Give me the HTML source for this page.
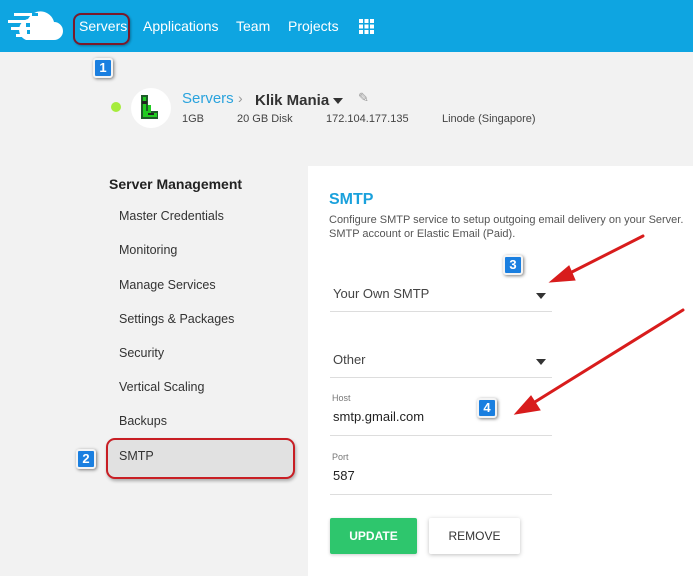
<!DOCTYPE html>
<html><head><meta charset="utf-8"><style>
*{margin:0;padding:0;box-sizing:border-box}
body{width:693px;height:576px;overflow:hidden;background:#f2f2f2;font-family:"Liberation Sans",sans-serif;position:relative;color:#333}
.a{position:absolute;white-space:nowrap}
.hdr{position:absolute;left:0;top:0;width:693px;height:52px;background:#0ea5e1}
.nav{color:#fff;font-size:14px;top:18px}
.badge{position:absolute;width:20px;height:20px;background:#1a7fe0;border:2px solid #f4f4f4;border-radius:3px;color:#fff;font-size:13px;font-weight:bold;text-align:center;line-height:16px;box-shadow:1px 1px 3px rgba(0,0,0,.5)}
.side{font-size:12.5px;color:#333;left:119px}
.panel{position:absolute;left:308px;top:166px;width:385px;height:410px;background:#fff}
.line{position:absolute;left:330px;width:222px;height:1px;background:#ddd}
.caret{position:absolute;width:0;height:0;border-left:5px solid transparent;border-right:5px solid transparent;border-top:6px solid #333}
</style></head><body>
<div class="hdr"></div>
<svg class="a" style="left:8px;top:10px" width="56" height="32" viewBox="0 0 56 32">
<path d="M18 30 H46 A9 9 0 0 0 46 12 A14 14 0 0 0 20 9 A11 11 0 0 0 18 30Z" fill="#fff"/>
<rect x="8" y="3" width="22" height="3" fill="#0ea5e1"/>
<rect x="6" y="3" width="18" height="3" fill="#fff"/><rect x="0" y="10" width="18" height="3" fill="#fff"/><rect x="3" y="17" width="16" height="3" fill="#fff"/><rect x="8" y="24" width="12" height="3" fill="#fff"/>
<rect x="18" y="13" width="4" height="4" fill="#0ea5e1"/><rect x="19" y="20" width="3" height="4" fill="#0ea5e1"/>
</svg>
<div class="a nav" style="left:79px">Servers</div>
<div class="a" style="left:73px;top:13px;width:57px;height:32px;border:2px solid #7a1a2a;border-radius:8px;box-shadow:1px 1px 2px rgba(0,0,0,.3)"></div>
<div class="a nav" style="left:143px">Applications</div>
<div class="a nav" style="left:236px">Team</div>
<div class="a nav" style="left:288px">Projects</div>
<svg class="a" style="left:359px;top:19px" width="15" height="15"><g fill="#fff"><rect x="0" y="0" width="4" height="4"/><rect x="5.5" y="0" width="4" height="4"/><rect x="11" y="0" width="4" height="4"/><rect x="0" y="5.5" width="4" height="4"/><rect x="5.5" y="5.5" width="4" height="4"/><rect x="11" y="5.5" width="4" height="4"/><rect x="0" y="11" width="4" height="4"/><rect x="5.5" y="11" width="4" height="4"/><rect x="11" y="11" width="4" height="4"/></g></svg>
<div class="badge" style="left:93px;top:58px">1</div>

<div class="a" style="left:111px;top:102px;width:10px;height:10px;border-radius:50%;background:#a6ec3c"></div>
<div class="a" style="left:131px;top:88px;width:40px;height:40px;border-radius:50%;background:#fff"></div>
<svg class="a" style="left:138px;top:93px" width="26" height="30"><path d="M3 2h7v16h10v8H3z" fill="#1f5b2a"/><path d="M5 4h3v14h2v-6h3v8h6v4H5z" fill="#2c2"/><path d="M4 8h5v3H4zM10 20h6v2h-6z" fill="#222"/></svg>
<div class="a" style="left:182px;top:90px;font-size:15px;color:#2aa3dd">Servers</div>
<div class="a" style="left:238px;top:90px;font-size:14px;color:#999">›</div>
<div class="a" style="left:255px;top:92px;font-size:15px;font-weight:bold;color:#333">Klik Mania</div>
<div class="caret" style="left:333px;top:98px"></div>
<div class="a" style="left:358px;top:90px;font-size:13px;color:#999">✎</div>
<div class="a" style="left:182px;top:113px;font-size:11px;color:#444">1GB</div>
<div class="a" style="left:237px;top:113px;font-size:11px;color:#444">20 GB Disk</div>
<div class="a" style="left:326px;top:113px;font-size:11px;color:#444">172.104.177.135</div>
<div class="a" style="left:442px;top:113px;font-size:11px;color:#444">Linode (Singapore)</div>

<div class="a" style="left:109px;top:176px;font-size:14px;font-weight:bold;color:#222">Server Management</div>
<div class="a side" style="top:209px">Master Credentials</div>
<div class="a side" style="top:243px">Monitoring</div>
<div class="a side" style="top:278px">Manage Services</div>
<div class="a side" style="top:312px">Settings &amp; Packages</div>
<div class="a side" style="top:346px">Security</div>
<div class="a side" style="top:380px">Vertical Scaling</div>
<div class="a side" style="top:414px">Backups</div>
<div class="a" style="left:106px;top:438px;width:189px;height:41px;background:#e1e1e1;border:2px solid #c81e24;border-radius:9px;box-shadow:1px 2px 3px rgba(0,0,0,.3)"></div>
<div class="a side" style="top:449px">SMTP</div>
<div class="badge" style="left:76px;top:449px">2</div>

<div class="panel"></div>
<div class="a" style="left:329px;top:191px;font-size:16px;font-weight:bold;color:#1aa1dc">SMTP</div>
<div class="a" style="left:329px;top:213px;font-size:11px;color:#555;line-height:14px">Configure SMTP service to setup outgoing email delivery on your Server.<br>SMTP account or Elastic Email (Paid).</div>
<div class="a" style="left:333px;top:286px;font-size:13px;color:#444">Your Own SMTP</div>
<div class="caret" style="left:536px;top:293px"></div>
<div class="line" style="top:311px"></div>
<div class="a" style="left:333px;top:352px;font-size:13px;color:#444">Other</div>
<div class="caret" style="left:536px;top:359px"></div>
<div class="line" style="top:377px"></div>
<div class="a" style="left:332px;top:393px;font-size:9px;color:#777">Host</div>
<div class="a" style="left:333px;top:409px;font-size:13px;color:#222">smtp.gmail.com</div>
<div class="line" style="top:435px"></div>
<div class="a" style="left:332px;top:452px;font-size:9px;color:#777">Port</div>
<div class="a" style="left:333px;top:468px;font-size:13px;color:#222">587</div>
<div class="line" style="top:494px"></div>
<div class="a" style="left:330px;top:518px;width:87px;height:36px;background:#2ec66d;color:#fff;font-size:12px;font-weight:bold;text-align:center;line-height:36px;border-radius:2px;box-shadow:0 1px 3px rgba(0,0,0,.2)">UPDATE</div>
<div class="a" style="left:429px;top:518px;width:91px;height:36px;background:#fff;color:#333;font-size:12px;text-align:center;line-height:36px;border-radius:2px;box-shadow:0 1px 4px rgba(0,0,0,.25)">REMOVE</div>
<div class="badge" style="left:503px;top:255px">3</div>
<div class="badge" style="left:477px;top:398px">4</div>

<svg class="a" style="left:0;top:0" width="693" height="576">
<g stroke="#d81c1c" stroke-width="3" fill="#d81c1c" stroke-linecap="round">
<line x1="643" y1="236" x2="566" y2="275"/>
<polygon points="550,282 569,266 575,280" stroke-width="1"/>
<line x1="683" y1="310" x2="530" y2="405"/>
<polygon points="515,414 531,396 540,410" stroke-width="1"/>
</g></svg>
</body></html>
